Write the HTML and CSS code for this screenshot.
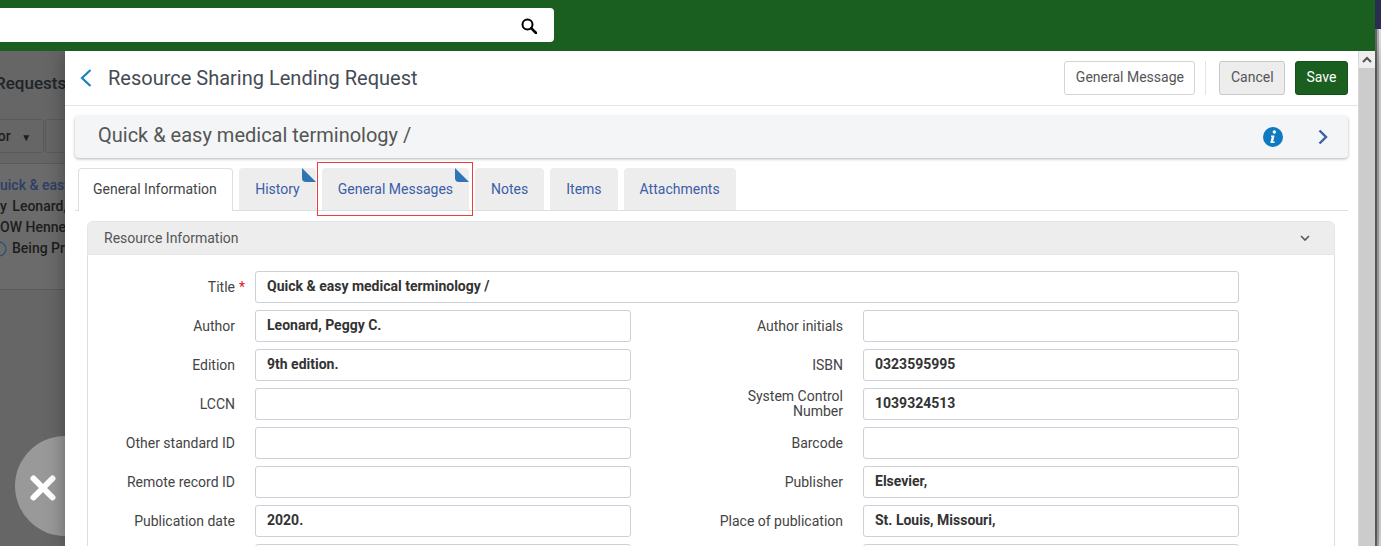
FILE: index.html
```html
<!DOCTYPE html>
<html lang="en">
<head>
<meta charset="utf-8">
<title>Resource Sharing Lending Request</title>
<link rel="stylesheet" href="styles.css">
</head>
<body>
<div class="page">
  <div class="main">
    <header class="topbar">
      <div class="search">
        <svg class="search-icon" viewBox="0 0 16 16" width="16" height="16"><circle cx="6.5" cy="6.5" r="5" fill="none" stroke="#000" stroke-width="2"/><path d="M10.2 10.2 15 15" stroke="#000" stroke-width="2.6" stroke-linecap="round"/></svg>
      </div>
    </header>
    <div class="stage">
      <aside class="backdrop">
        <div class="bd-title">Requests</div>
        <div class="bd-filters">
          <span class="bd-filter">hor <i class="caret">▼</i></span>
          <span class="bd-filter bd-filter-next"></span>
        </div>
        <div class="bd-record">
          <div class="bd-link">uick &amp; easy medical</div>
          <div class="bd-line bd-by">y Leonard, Peggy C.</div>
          <div class="bd-line">OW Hennepin</div>
          <div class="bd-status">
            <svg class="bd-clock" viewBox="0 0 16 16" width="16" height="16"><circle cx="8" cy="8" r="7" fill="none" stroke="#2c4c78" stroke-width="1.2"/><path d="M8 4v4l-3 3" fill="none" stroke="#2c4c78" stroke-width="1.2"/></svg>
            <span>Being Processed</span>
          </div>
        </div>
        <button class="close-round" aria-label="Close">
          <svg viewBox="0 0 26 26" width="26" height="26"><path d="M3.5 3.5 22.5 22.5M22.5 3.5 3.5 22.5" stroke="#fff" stroke-width="6" stroke-linecap="round"/></svg>
        </button>
      </aside>
      <section class="panel">
        <div class="panel-content">
          <div class="panel-head">
            <svg class="back" viewBox="0 0 12 18" width="12" height="18"><path d="M10.5 1 2 9l8.500 8" fill="none" stroke="#1b80c0" stroke-width="2.200"/></svg>
            <h1 class="panel-title">Resource Sharing Lending Request</h1>
            <div class="actions">
              <button class="btn btn-plain">General Message</button>
              <span class="sep"></span>
              <button class="btn btn-cancel">Cancel</button>
              <button class="btn btn-save">Save</button>
            </div>
          </div>
          <div class="summary">
            <span class="summary-text">Quick &amp; easy medical terminology /</span>
            <svg class="info" viewBox="0 0 20 20" width="20" height="20"><circle cx="10" cy="10" r="10" fill="#0f7abf"/><circle cx="11.300" cy="5" r="1.700" fill="#fff"/><path d="M8 8.600h3.600l-1.500 6h1.500v1.300H7.300l1.400-6H8z" fill="#fff"/></svg>
            <svg class="next" viewBox="0 0 10 16" width="10" height="16"><path d="M1.500 1.500 8 8l-6.500 6.500" fill="none" stroke="#3b5ea8" stroke-width="2.400"/></svg>
          </div>
          <nav class="tabs">
            <a class="tab tab-active">General Information</a>
            <a class="tab">History<svg class="fold" viewBox="0 0 14 14" width="14" height="14"><path d="M0 0 14 14H4Q0 14 0 10z" fill="#2f75b5"/></svg></a>
            <a class="tab">General Messages<svg class="fold" viewBox="0 0 14 14" width="14" height="14"><path d="M0 0 14 14H4Q0 14 0 10z" fill="#2f75b5"/></svg><span class="highlight"></span></a>
            <a class="tab">Notes</a>
            <a class="tab">Items</a>
            <a class="tab">Attachments</a>
          </nav>
          <div class="section">
            <div class="section-head">
              <span>Resource Information</span>
              <svg class="collapse" viewBox="0 0 10 6" width="10" height="6"><path d="M1 1l4 4 4-4" fill="none" stroke="#555" stroke-width="1.600"/></svg>
            </div>
            <div class="form">
              <label class="label">Title <span class="star">*</span></label>
              <div class="field field-wide">Quick &amp; easy medical terminology /</div>

              <label class="label">Author</label>
              <div class="field">Leonard, Peggy C.</div>
              <label class="label">Author initials</label>
              <div class="field"></div>

              <label class="label">Edition</label>
              <div class="field">9th edition.</div>
              <label class="label">ISBN</label>
              <div class="field">0323595995</div>

              <label class="label">LCCN</label>
              <div class="field"></div>
              <label class="label label-narrow">System Control Number</label>
              <div class="field">1039324513</div>

              <label class="label">Other standard ID</label>
              <div class="field"></div>
              <label class="label">Barcode</label>
              <div class="field"></div>

              <label class="label">Remote record ID</label>
              <div class="field"></div>
              <label class="label">Publisher</label>
              <div class="field">Elsevier,</div>

              <label class="label">Publication date</label>
              <div class="field">2020.</div>
              <label class="label">Place of publication</label>
              <div class="field">St. Louis, Missouri,</div>

              <label class="label"></label>
              <div class="field"></div>
              <label class="label"></label>
              <div class="field"></div>
            </div>
          </div>
        </div>
        <div class="scrollbar">
          <div class="scroll-up">
            <svg viewBox="0 0 10 7" width="10" height="7"><path d="M1 6l4-4 4 4" fill="none" stroke="#555" stroke-width="2"/></svg>
          </div>
        </div>
      </section>
    </div>
  </div>
  <div class="edge">
    <div class="edge-top"></div>
    <div class="edge-rest"><span class="edge-dark"></span><span class="edge-mid"></span><span class="edge-light"></span></div>
  </div>
</div>
</body>
</html>
```

FILE: styles.css
```css
* { box-sizing: border-box; }
html, body { margin: 0; height: 100%; overflow: hidden; }
body { font-family: Roboto, "Liberation Sans", sans-serif; font-size: 14px; color: #444; background: #fff; }

.page { display: flex; height: 546px; width: 1381px; overflow: hidden; }
.main { flex: 1; display: flex; flex-direction: column; min-width: 0; }

.topbar { position: relative; z-index: 2; height: 51px; background: #1a5e20; padding-top: 8px; flex: none; }
.search { width: 554px; height: 34px; background: #fff; border-radius: 0 4px 4px 0; display: flex; align-items: center; justify-content: flex-end; padding-right: 17px; }
.search-icon { display: block; margin-top: 1px; }

.stage { flex: 1; display: flex; min-height: 0; }

.backdrop { position: relative; width: 65px; flex: none; background: #666; overflow: hidden; white-space: nowrap; color: #1d1d1d; font-weight: 500; }
.bd-title { height: 68px; padding-top: 21px; margin-left: -5px; font-size: 17px; line-height: 22px; color: #202428; }
.bd-filters { display: flex; margin-left: -40px; }
.bd-filter { display: block; width: 84px; height: 34px; flex: none; border: 1px solid #5a5a5a; border-radius: 3px; line-height: 32px; padding-left: 29px; color: #1d1d1d; }
.bd-filter-next { width: 60px; margin-left: 1px; }
.caret { font-style: normal; font-size: 10px; margin-left: 7px; vertical-align: 0; }
.bd-record { margin-top: 10px; height: 127px; background: #6b6b6b; border-top: 1px solid #5a5a5a; border-bottom: 1px solid #5a5a5a; padding-top: 11px; line-height: 21px; }
.bd-link { color: #2c3f66; }
.bd-by { word-spacing: 2px; }
.bd-status { display: flex; align-items: center; gap: 5px; margin-left: -9px; color: #1d1d1d; }
.bd-clock { flex: none; }
.close-round { position: absolute; left: 15px; top: 385px; width: 100px; height: 100px; border: 0; border-radius: 50%; background: #999; padding: 3px 0 0 15px; display: flex; align-items: center; }

.panel { position: relative; flex: 1; display: flex; background: #fff; box-shadow: 0 0 18px rgba(0, 0, 0, .35); min-width: 0; }
.panel-content { flex: 1; min-width: 0; overflow: hidden; }

.panel-head { height: 55px; border-bottom: 1px solid #e2e4e8; padding: 10px 10px 0 15px; display: flex; align-items: flex-start; }
.back { margin-top: 8px; flex: none; }
.panel-title { margin: 3px 0 0 16px; font-size: 20px; font-weight: 400; line-height: 28px; color: #444b55; }
.actions { margin-left: auto; display: flex; }
.btn { height: 34px; font: 14px Roboto, "Liberation Sans", sans-serif; border-radius: 3px; padding: 0 10.5px 2px; }
.btn-plain { background: #fff; border: 1px solid #d4d4d4; color: #555; }
.sep { width: 1px; height: 34px; background: #e4e4e4; margin: 0 13px 0 10px; }
.btn-cancel { background: #ededed; border: 1px solid #c8c8c8; color: #555; margin-right: 10px; }
.btn-save { background: #1a5e20; border: 1px solid #14501a; color: #fff; }

.summary { margin: 10px 10px 0; height: 42px; background: #f3f5f7; border-radius: 4px; box-shadow: 0 1px 3px rgba(0, 0, 0, .3); display: flex; align-items: center; padding: 0 20px 0 23px; }
.summary-text { font-size: 20px; color: #555; flex: 1; margin-bottom: 4px; }
.info { flex: none; margin-right: 35px; }
.next { flex: none; }

.tabs { margin: 10px 10px 0; height: 43px; border-bottom: 1px solid #dcdfe8; padding-left: 3px; display: flex; gap: 6px; }
.tab { position: relative; height: 42px; padding: 0 16px; line-height: 42px; background: #ededed; color: #3b5ea8; border-radius: 4px 4px 0 0; white-space: nowrap; }
.tab-active { background: #fff; color: #444; border: 1px solid #dcdfe8; border-bottom: 0; height: 43px; padding: 0 15.4px 0 14px; line-height: 40px; }
.fold { position: absolute; right: 0; top: 0; }
.highlight { position: absolute; left: -5px; right: -4px; top: -6px; bottom: -6px; border: 1px solid #ee3b3b; }

.section { margin: 10px 23px 0 22px; }
.section-head { height: 34px; background: #ededed; border: 1px solid #e6e6e6; border-radius: 6px 6px 0 0; padding: 0 24px 0 16px; display: flex; align-items: center; justify-content: space-between; color: #555; }
.form { border-left: 1px solid #ddd; border-right: 1px solid #ddd; padding: 16px 0 20px; display: grid; grid-template-columns: 147px 376px 192px 376px; column-gap: 20px; row-gap: 7px; grid-auto-rows: 32px; }
.label { display: flex; align-items: center; justify-content: flex-end; text-align: right; line-height: 15px; color: #444; }
.label-narrow { padding-left: 60px; }
.star { color: #e0201b; margin: 0 -10px 0 4px; }
.field { height: 32px; border: 1px solid #ccd0d8; border-radius: 3px; padding: 0 11px; line-height: 28px; font-weight: 700; color: #333; }
.field-wide { grid-column: span 3; }

.scrollbar { width: 17px; flex: none; background: #ccc; border-left: 1px solid #d8d8d8; }
.scroll-up { height: 17px; background: #eee; display: flex; align-items: center; justify-content: center; }

.edge { width: 6px; flex: none; display: flex; flex-direction: column; }
.edge-top { height: 29px; background: #2a2d52; }
.edge-rest { flex: 1; display: flex; }
.edge-dark { width: 2px; background: #666; }
.edge-mid { width: 2px; background: #aaa; }
.edge-light { flex: 1; background: #ddd; }
```
